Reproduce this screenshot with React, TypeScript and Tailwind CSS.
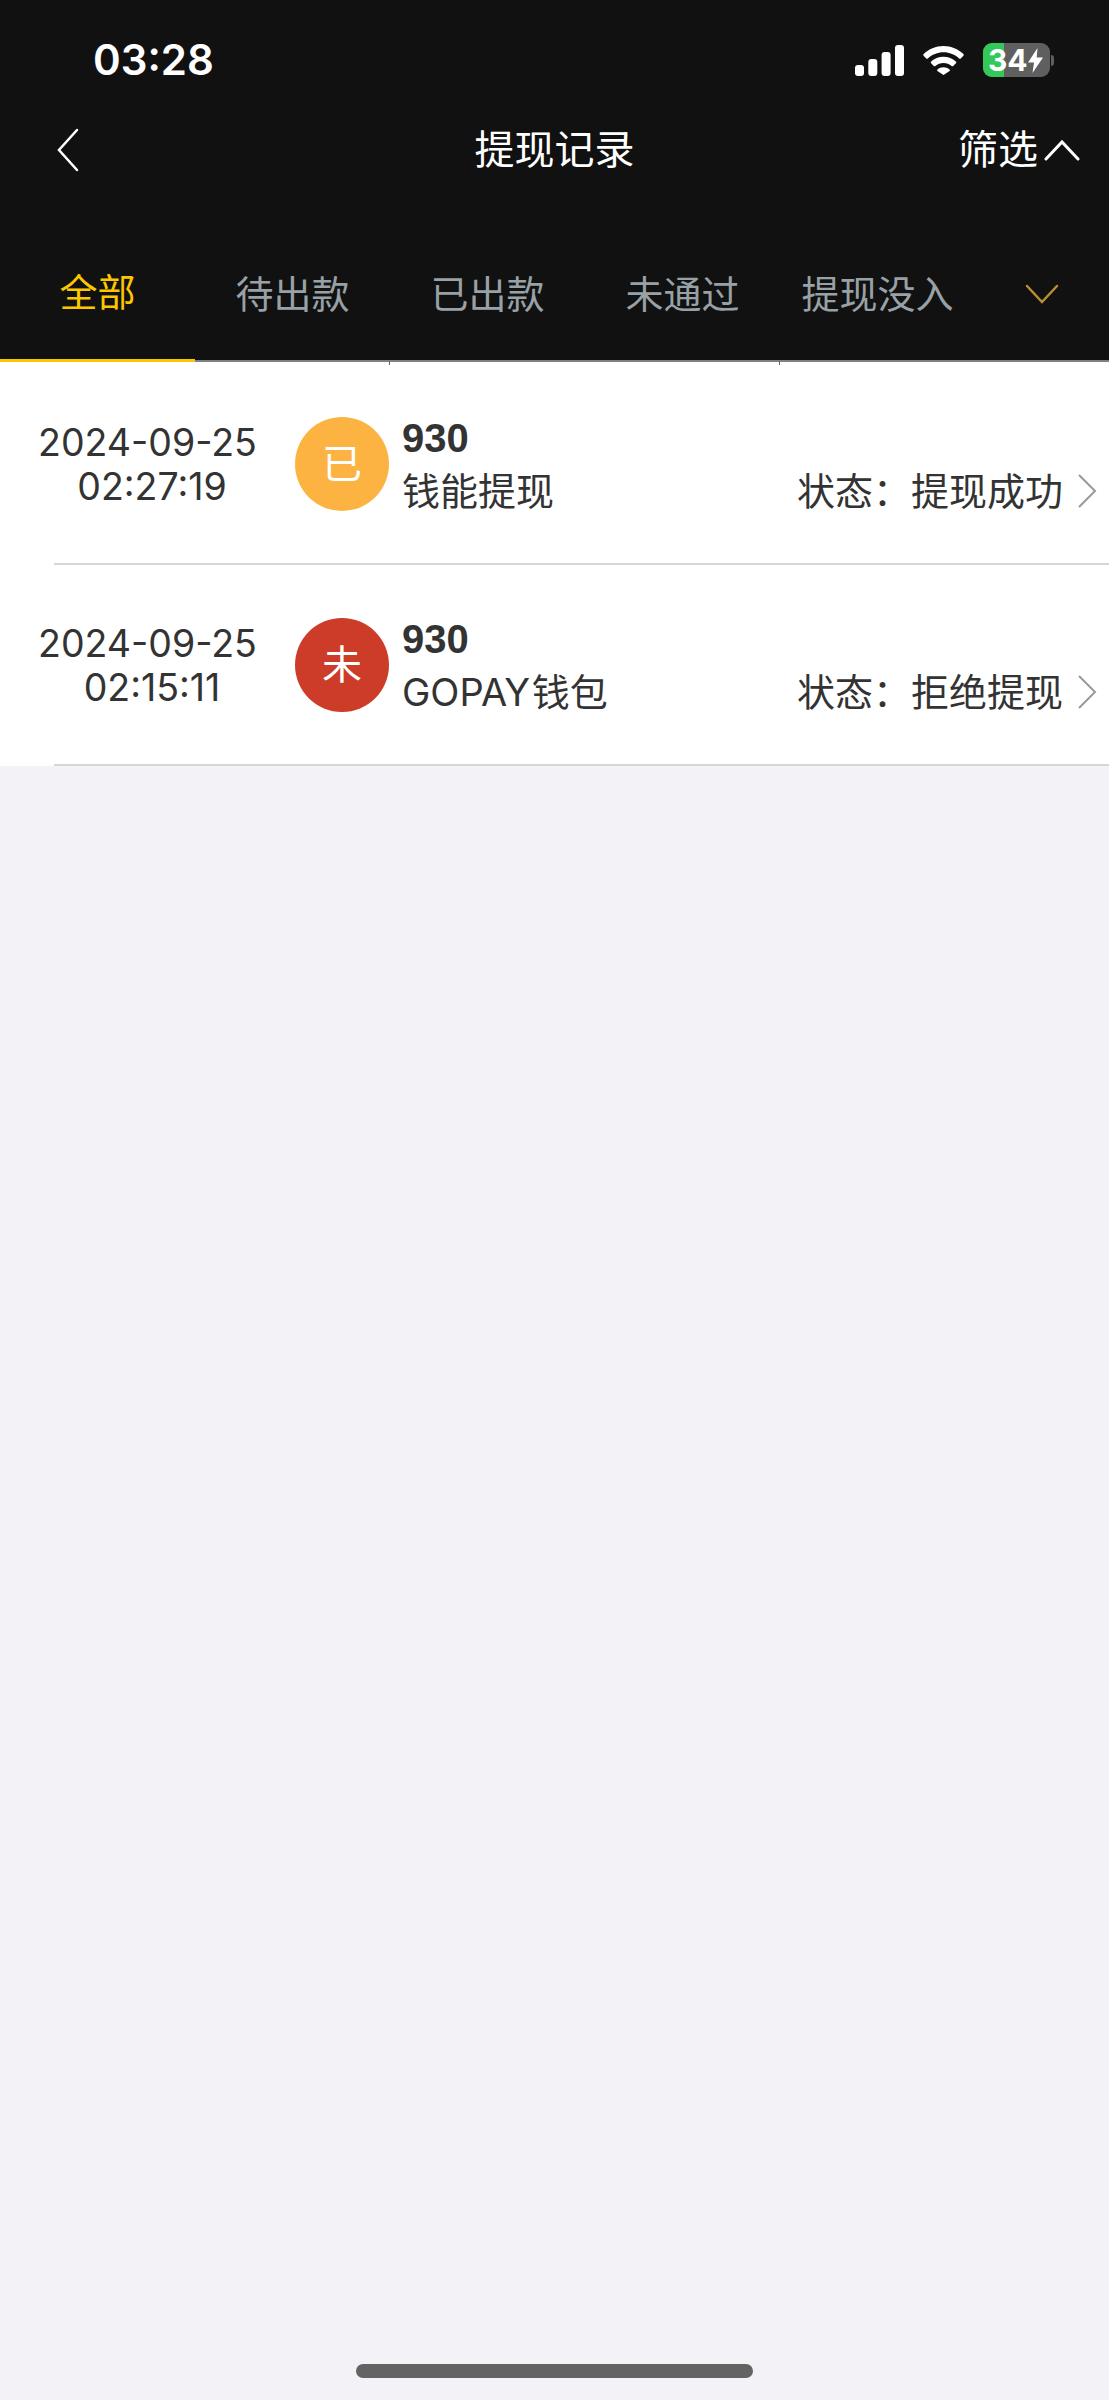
const font = { fontFamily: '"Inter", "Noto Sans CJK SC", sans-serif' }

const tabs = [
  { name: "全部", active: true },
  { name: "待出款", active: false, tick: true },
  { name: "已出款", active: false },
  { name: "未通过", active: false, tick: true },
  { name: "提现没入", active: false },
]

const records = [
  {
    date: "2024-09-25",
    time: "02:27:19",
    badge: "已",
    badgeClass: "bg-[#fdb342]",
    amount: "930",
    name: "钱能提现",
    status: "提现成功",
  },
  {
    date: "2024-09-25",
    time: "02:15:11",
    badge: "未",
    badgeClass: "bg-[#cc3c28]",
    amount: "930",
    name: "GOPAY 钱包",
    status: "拒绝提现",
  },
]

function StatusIcons() {
  return (
    <div className="flex items-center">
      <svg width="49" height="31" viewBox="0 0 49 31" fill="#fff">
        <rect x="0" y="20" width="9" height="11" rx="3" />
        <rect x="13.3" y="14" width="9" height="17" rx="3" />
        <rect x="26.6" y="7" width="9" height="24" rx="3" />
        <rect x="40" y="0" width="9" height="31" rx="3" />
      </svg>
      <svg className="ml-[19px]" width="41" height="29" viewBox="0 0 41 29" fill="#fff">
        <path d="M20.5 0C12.7 0 5.8 3 .6 8c-.5.5-.5 1.2 0 1.700l2.600 2.700c.5.500 1.200.500 1.700 0C9 8.500 14.500 6.200 20.500 6.200s11.500 2.300 15.600 6.200c.5.500 1.200.500 1.700 0l2.600-2.700c.5-.5.5-1.200 0-1.700C35.200 3 28.300 0 20.500 0z" />
        <path d="M20.500 10.700c-4.800 0-9.100 1.800-12.400 4.800-.5.500-.5 1.200 0 1.700l2.700 2.700c.4.500 1.100.500 1.600.100 2.200-1.900 5-3 8.100-3s5.900 1.100 8.100 3c.5.400 1.200.400 1.600-.100l2.700-2.700c.5-.5.5-1.200 0-1.700-3.300-3-7.600-4.800-12.400-4.800z" />
        <path d="M20.500 21.300c-2.300 0-4.400.8-6 2.200-.5.400-.5 1.100-.1 1.600l5.300 3.500c.4.500 1.200.500 1.600 0l5.300-3.500c.4-.5.400-1.200-.1-1.600-1.600-1.400-3.700-2.200-6-2.200z" />
      </svg>
      <div className="ml-[19px] flex items-center">
        <div className="relative flex h-[34px] w-[67px] items-center overflow-hidden rounded-[9px] bg-[#5f5f5f]">
          <div className="absolute inset-y-0 left-0 w-[21px] bg-[#34c759]"></div>
          <span className="relative ml-[5px] text-[30px] leading-none font-bold text-white">34</span>
          <svg className="relative" width="15" height="25" viewBox="0 0 15 25" fill="#fff">
            <path d="M9.500 0 0 14.500h6L4.500 25 15 9.500H8.700z" />
          </svg>
        </div>
        <div className="ml-[1px] h-[11px] w-[3px] rounded-r-full bg-[#5f5f5f]"></div>
      </div>
    </div>
  )
}

function Row({ record }: { record: (typeof records)[number] }) {
  return (
    <div>
      <div className="flex h-[199px] items-start">
        <div className="w-[295px] pt-[57px] text-center text-[37.5px] leading-[44px] text-[#333]">
          <div>{record.date}</div>
          <div className="pl-[9px]">{record.time}</div>
        </div>
        <div
          className={`mt-[53px] flex h-[94px] w-[94px] items-center justify-center rounded-full text-[40px] text-white ${record.badgeClass}`}
        >
          {record.badge}
        </div>
        <div className="ml-[13px] flex-1 pt-[50px] text-[#333]">
          <div className="font-['Liberation_Sans'] text-[40px] leading-[48px] font-bold">{record.amount}</div>
          <div className="mt-[5px] flex items-center justify-between text-[38px] leading-[48px]">
            <span className="[word-spacing:-9px]">{record.name}</span>
            <div className="flex items-center pr-[12px]">
              <span>状态：</span>
              <span>{record.status}</span>
              <svg className="ml-[14px]" width="20" height="34" viewBox="0 0 20 34" fill="none" stroke="#999" strokeWidth="2">
                <path d="M2 1l16 16L2 33" />
              </svg>
            </div>
          </div>
        </div>
      </div>
      <div className="ml-[54px] h-[2px] bg-[#d6d6d6]"></div>
    </div>
  )
}

export default function App() {
  return (
    <div className="flex h-[2400px] flex-col bg-[#f2f2f7]" style={font}>
      <header className="h-[362px] bg-[#111111] text-white">
        <div className="flex h-[120px] items-center justify-between pr-[55px] pl-[93px]">
          <span className="text-[42px] leading-none font-semibold">03:28</span>
          <StatusIcons />
        </div>
        <div className="grid h-[56px] grid-cols-[1fr_auto_1fr] items-center px-[29px] text-[40px]">
          <div className="pl-[28px]">
            <svg width="22" height="44" viewBox="0 0 22 44" fill="none" stroke="#fff" strokeWidth="2.500" strokeLinecap="round">
              <path d="M20 2 2 22l18 20" />
            </svg>
          </div>
          <div>提现记录</div>
          <div className="flex items-center justify-end">
            <span>筛选</span>
            <svg className="ml-[6px]" width="36" height="22" viewBox="0 0 36 22" fill="none" stroke="#fff" strokeWidth="3" strokeLinecap="round">
              <path d="M2 20 18 3l16 17" />
            </svg>
          </div>
        </div>
        <div className="mt-[52px] flex h-[134px] border-b-2 border-[#808080]">
          {tabs.map((tab) => (
            <div
              key={tab.name}
              className={`relative -mb-[2px] flex w-[195px] items-center justify-center pb-[2px] text-[38px] ${
                tab.active ? "border-b-[3px] border-[#fdc700] text-[#fdc700]" : "text-[#98a1a6]"
              }`}
            >
              {tab.name}
              {tab.tick && <div className="absolute right-0 -bottom-[3px] h-[4px] w-px bg-[#666]"></div>}
            </div>
          ))}
          <div className="flex flex-1 items-center justify-center">
            <svg width="34" height="20" viewBox="0 0 34 20" fill="none" stroke="#b8902f" strokeWidth="2.500" strokeLinecap="round">
              <path d="M2 2l15 16L32 2" />
            </svg>
          </div>
        </div>
      </header>
      <div className="bg-white pt-[2px]">
        {records.map((record) => (
          <Row key={record.time} record={record} />
        ))}
      </div>
      <div className="flex flex-1 items-end justify-center pb-[22px]">
        <div className="h-[14px] w-[397px] rounded-full bg-[#636363]"></div>
      </div>
    </div>
  )
}
